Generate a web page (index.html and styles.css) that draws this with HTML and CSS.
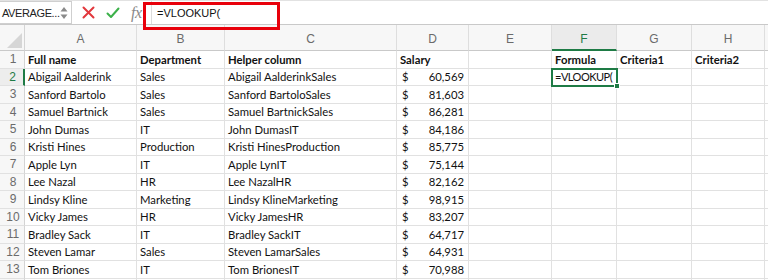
FILE: index.html
```html
<!DOCTYPE html>
<html>
<head>
<meta charset="utf-8">
<link rel="stylesheet" href="styles.css">
</head>
<body>
<div class="app">
  <div class="formula-bar">
    <div class="name-box">
      <span class="name-text">AVERAGE...</span>
      <svg class="spin" width="8" height="14" viewBox="0 0 8 14"><path d="M4 1 L7.5 5.5 L0.5 5.5 Z M4 13 L7.5 8.5 L0.5 8.5 Z" fill="#8a8a8a"/></svg>
    </div>
    <div class="fx-icons">
      <svg class="ic" width="13" height="13" viewBox="0 0 13 13"><path d="M1.5 1.5 L11.5 11.5 M11.5 1.5 L1.5 11.5" stroke="#e2373c" stroke-width="2" stroke-linecap="round"/></svg>
      <svg class="ic" width="14" height="12" viewBox="0 0 14 12"><path d="M1.5 6.5 L5 10 L12.5 1.5" stroke="#3cb14a" stroke-width="2" fill="none" stroke-linecap="round" stroke-linejoin="round"/></svg>
      <span class="fx">fx</span>
    </div>
    <div class="formula-input">=VLOOKUP(</div>
    <div class="highlight"></div>
  </div>
  <div class="sheet">
    <div class="corner"><svg width="18" height="18" viewBox="0 0 18 18"><path d="M17 2 L17 17 L2 17 Z" fill="#d6d6d6"/></svg></div>
    <div class="ch">A</div><div class="ch">B</div><div class="ch">C</div><div class="ch">D</div><div class="ch">E</div><div class="ch active">F</div><div class="ch">G</div><div class="ch">H</div><div class="ch"></div>

    <div class="rh">1</div><div class="c b">Full name</div><div class="c b">Department</div><div class="c b">Helper column</div><div class="c b">Salary</div><div class="c"></div><div class="c b">Formula</div><div class="c b">Criteria1</div><div class="c b">Criteria2</div><div class="c"></div>

    <div class="rh active">2</div><div class="c">Abigail Aalderink</div><div class="c">Sales</div><div class="c">Abigail AalderinkSales</div><div class="c money"><span>$</span><span>60,569</span></div><div class="c"></div><div class="c sel"><span class="sel-text">=VLOOKUP(</span><span class="caret"></span><span class="handle"></span></div><div class="c"></div><div class="c"></div><div class="c"></div>

    <div class="rh">3</div><div class="c">Sanford Bartolo</div><div class="c">Sales</div><div class="c">Sanford BartoloSales</div><div class="c money"><span>$</span><span>81,603</span></div><div class="c"></div><div class="c"></div><div class="c"></div><div class="c"></div><div class="c"></div>

    <div class="rh">4</div><div class="c">Samuel Bartnick</div><div class="c">Sales</div><div class="c">Samuel BartnickSales</div><div class="c money"><span>$</span><span>86,281</span></div><div class="c"></div><div class="c"></div><div class="c"></div><div class="c"></div><div class="c"></div>

    <div class="rh">5</div><div class="c">John Dumas</div><div class="c">IT</div><div class="c">John DumasIT</div><div class="c money"><span>$</span><span>84,186</span></div><div class="c"></div><div class="c"></div><div class="c"></div><div class="c"></div><div class="c"></div>

    <div class="rh">6</div><div class="c">Kristi Hines</div><div class="c">Production</div><div class="c">Kristi HinesProduction</div><div class="c money"><span>$</span><span>85,775</span></div><div class="c"></div><div class="c"></div><div class="c"></div><div class="c"></div><div class="c"></div>

    <div class="rh">7</div><div class="c">Apple Lyn</div><div class="c">IT</div><div class="c">Apple LynIT</div><div class="c money"><span>$</span><span>75,144</span></div><div class="c"></div><div class="c"></div><div class="c"></div><div class="c"></div><div class="c"></div>

    <div class="rh">8</div><div class="c">Lee Nazal</div><div class="c">HR</div><div class="c">Lee NazalHR</div><div class="c money"><span>$</span><span>82,162</span></div><div class="c"></div><div class="c"></div><div class="c"></div><div class="c"></div><div class="c"></div>

    <div class="rh">9</div><div class="c">Lindsy Kline</div><div class="c">Marketing</div><div class="c">Lindsy KlineMarketing</div><div class="c money"><span>$</span><span>98,915</span></div><div class="c"></div><div class="c"></div><div class="c"></div><div class="c"></div><div class="c"></div>

    <div class="rh">10</div><div class="c">Vicky James</div><div class="c">HR</div><div class="c">Vicky JamesHR</div><div class="c money"><span>$</span><span>83,207</span></div><div class="c"></div><div class="c"></div><div class="c"></div><div class="c"></div><div class="c"></div>

    <div class="rh">11</div><div class="c">Bradley Sack</div><div class="c">IT</div><div class="c">Bradley SackIT</div><div class="c money"><span>$</span><span>64,717</span></div><div class="c"></div><div class="c"></div><div class="c"></div><div class="c"></div><div class="c"></div>

    <div class="rh">12</div><div class="c">Steven Lamar</div><div class="c">Sales</div><div class="c">Steven LamarSales</div><div class="c money"><span>$</span><span>64,931</span></div><div class="c"></div><div class="c"></div><div class="c"></div><div class="c"></div><div class="c"></div>

    <div class="rh">13</div><div class="c">Tom Briones</div><div class="c">IT</div><div class="c">Tom BrionesIT</div><div class="c money"><span>$</span><span>70,988</span></div><div class="c"></div><div class="c"></div><div class="c"></div><div class="c"></div><div class="c"></div>

    <div class="rh"></div><div class="c"></div><div class="c"></div><div class="c"></div><div class="c"></div><div class="c"></div><div class="c"></div><div class="c"></div><div class="c"></div><div class="c"></div>
  </div>
</div>
</body>
</html>
```

FILE: styles.css
```css
* { box-sizing: border-box; }
html, body { margin: 0; padding: 0; background: #fff; overflow: hidden; }
.app { width: 768px; height: 280px; overflow: hidden; position: relative; }

.formula-bar {
  height: 25px;
  display: flex;
  align-items: center;
  border-bottom: 1px solid #c9c9c9;
  border-top: 1px solid #e2e2e2;
  position: relative;
  font-family: "Liberation Sans", Arial, sans-serif;
}
.name-box {
  width: 72px;
  flex: 0 0 72px;
  height: 23px;
  border: 1px solid #cfcfcf;
  border-left: none;
  display: flex;
  align-items: center;
  justify-content: space-between;
  padding: 0 5px 0 2px;
  font-size: 11px;
  letter-spacing: -0.4px;
  color: #222;
}
.name-text { white-space: nowrap; }
.spin { flex: 0 0 8px; margin-top: 1px; }
.fx-icons {
  display: flex;
  align-items: center;
  padding-left: 10px;
  width: 79px;
  flex: 0 0 79px;
  height: 23px;
}
.ic { margin-right: 11px; flex: none; }
.fx {
  font-family: "Liberation Serif", "Times New Roman", serif;
  font-style: italic;
  font-size: 16px;
  color: #8a8a8a;
  letter-spacing: -0.5px;
}
.formula-input {
  flex: 1;
  height: 23px;
  border-left: 1px solid #dcdcdc;
  padding-left: 5px;
  display: flex;
  align-items: center;
  font-size: 11px;
  color: #111;
}
.highlight {
  position: absolute;
  left: 143px;
  top: 1px;
  width: 137px;
  height: 28px;
  border: 3px solid #e8000b;
  z-index: 5;
  pointer-events: none;
}

.sheet {
  display: grid;
  grid-template-columns: 25px 112px 88px 172px 72px 83px 65px 75px 73px 30px;
  grid-template-rows: 26px repeat(14, 17.5px);
  font-family: "Lato", "Open Sans", sans-serif;
  font-size: 11.3px;
  color: #111;
}
.corner {
  background: #f7f7f7;
  border-right: 1px solid #d4d4d4;
  border-bottom: 1px solid #c9c9c9;
  display: flex;
  align-items: flex-end;
  justify-content: flex-end;
  overflow: hidden;
}
.corner svg { display: block; margin: 0 1px 1px 0; }
.ch {
  background: #f7f7f7;
  border-right: 1px solid #dedede;
  border-bottom: 1px solid #c9c9c9;
  color: #6b6b6b;
  font-family: "Liberation Sans", Arial, sans-serif;
  font-size: 12px;
  display: flex;
  align-items: center;
  justify-content: center;
  padding-top: 2px;
}
.ch.active {
  background: #ebebeb;
  color: #1e7b45;
  border-bottom: 2px solid #1e7b45;
  padding-top: 3px;
}
.rh {
  background: #f7f7f7;
  border-right: 1px solid #d4d4d4;
  border-bottom: 1px solid #e1e1e1;
  color: #6b6b6b;
  font-family: "Liberation Sans", Arial, sans-serif;
  font-size: 12px;
  display: flex;
  align-items: center;
  justify-content: center;
  padding-left: 2px;
}
.rh.active {
  color: #1e7b45;
  border-right: 2px solid #1e7b45;
  background: #ededed;
}
.c {
  border-right: 1px solid #e1e1e1;
  border-bottom: 1px solid #e1e1e1;
  padding: 0 3px;
  display: flex;
  align-items: center;
  white-space: nowrap;
  overflow: visible;
  position: relative;
}
.c.b { font-weight: bold; }
.c.money { justify-content: space-between; padding: 0 4px 0 5px; }
.c.sel {
  outline: 2px solid #1e7b45;
  outline-offset: -1px;
  z-index: 2;
  padding-left: 3px;
}
.sel-text { font-size: 11px; letter-spacing: -0.5px; }
.caret {
  display: inline-block;
  width: 1px;
  height: 13px;
  background: #111;
  margin-left: 1px;
}
.handle {
  position: absolute;
  right: -4px;
  bottom: -4px;
  width: 6px;
  height: 6px;
  background: #1e7b45;
  border: 1px solid #fff;
}
```
